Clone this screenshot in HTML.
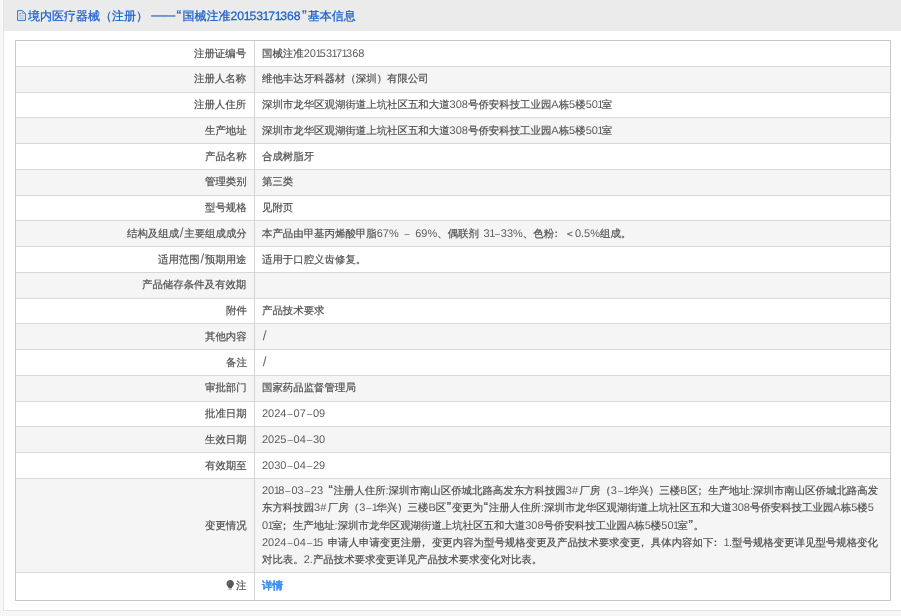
<!DOCTYPE html><html><head><meta charset="utf-8"><style>
*{margin:0;padding:0;box-sizing:border-box}
html,body{width:901px;height:616px;overflow:hidden;background:#f7f7f7;font-family:"Liberation Sans",sans-serif;color:#333;text-rendering:geometricPrecision}
#panel{position:absolute;left:3px;top:0;width:910px;height:611px;background:#fff;border-left:1px solid #e4e4e4;border-bottom:1px solid #e4e4e4}
#head{position:absolute;left:0;top:0;width:100%;height:31px;background:#ebebeb}
#title{position:absolute;left:24px;top:8.6px;font-size:12px;line-height:15px;color:#1a5fcc;white-space:nowrap;-webkit-text-stroke:0.25px #1a5fcc}
#title b{font-weight:normal;font-size:12.2px}
#title i{font-style:normal;letter-spacing:-1.1px;margin-left:-0.4px}
#title q{padding:0 1.25px;font-size:14px;line-height:0}
q:before,q:after{content:none}
s{text-decoration:none}
u{text-decoration:none}
em{font-style:normal}
.md{position:relative;top:-1px}
.p{position:relative;left:-3.2px}
.v i.w{letter-spacing:-0.6px;margin-left:-0.3px}
#icon{position:absolute;left:-4px;top:0}
#tbl{position:absolute;left:15px;top:40px;width:876px;height:561px;border:1px solid #c9c9c9}
.r{position:absolute;left:0;width:874px;border-top:1px solid #d9d9d9}
.r.g{background:#f5f5f5}
.l{position:absolute;right:643.6px;white-space:nowrap;font-size:10.43px;color:#4d4d4d}
.v{position:absolute;left:246px;white-space:nowrap;font-size:10.43px;color:#4d4d4d;word-spacing:1.8px}
.v b,.l b{font-weight:normal;font-size:11px}
.v i,.l i{font-style:normal;letter-spacing:-1.65px;margin-left:-0.55px}
.v u{font-size:9.4px;padding:0 0.85px 0 1.05px;position:relative;top:-0.3px;line-height:0}
.v em{letter-spacing:1.5px}
.v q{padding:0 0.7px;font-size:13px;line-height:0}
.v s,.l s{padding:0 0.7px;font-size:13.5px;line-height:0;color:#666}
#div{position:absolute;left:238px;top:0;width:1px;height:559px;background:#d3d3d3}
a{color:#3a8ef0;text-decoration:none;font-weight:bold}
.l,.v,#title{will-change:transform}
.l,.v{-webkit-text-stroke:0.2px #555}
.l b,.v b{-webkit-text-stroke:0;color:#5c5c5c}
.v a{-webkit-text-stroke:0.1px #3a8ef0}
.v s,.l s{-webkit-text-stroke:0}
</style></head><body>
<div id="panel"><div id="head"></div>
<svg id="icon" width="30" height="30" viewBox="0 0 30 30"><path d="M17.6 10.6H22.4L25.4 13.6V20.4H17.6Z" fill="none" stroke="#2a6ad2" stroke-width="0.95" stroke-linejoin="round"/><path d="M22.4 11.2V13.4H24.8" fill="none" stroke="#5f8fdc" stroke-width="0.8"/><path d="M19.3 13.7H21.2" stroke="#2a6ad2" stroke-width="0.9"/><path d="M19.3 15.9H23.7M19.3 18.1H23.7" stroke="#86aae4" stroke-width="0.9"/></svg>
<div id="title">境内医疗器械（注册） <span class="md">—</span><span class="md">—</span><q>“</q>国械注准<b class="n">20<i>1</i>53<i>1</i>7<i>1</i>368</b><q>”</q>基本信息</div>
</div>
<div id="tbl">
<div class="r" style="top:-1px;height:26px;border-top:none;"><span class="l" style="top:7.60px;line-height:13px">注册证编号</span><span class="v" style="top:7.60px;line-height:13px">国械注准<b class="n">20<i>1</i>53<i>1</i>7<i>1</i>368</b></span></div>
<div class="r g" style="top:25px;height:26px;"><span class="l" style="top:6.36px;line-height:13px">注册人名称</span><span class="v" style="top:6.36px;line-height:13px">维他丰达牙科器材（深圳）有限公司</span></div>
<div class="r" style="top:51px;height:25px;"><span class="l" style="top:6.12px;line-height:13px">注册人住所</span><span class="v" style="top:6.12px;line-height:13px">深圳市龙华区观湖街道上坑社区五和大道<b class="n">308</b>号侨安科技工业园<b class="n">A</b>栋<b class="n">5</b>楼<b class="n">50<i>1</i></b>室</span></div>
<div class="r g" style="top:76px;height:26px;"><span class="l" style="top:6.88px;line-height:13px">生产地址</span><span class="v" style="top:6.88px;line-height:13px">深圳市龙华区观湖街道上坑社区五和大道<b class="n">308</b>号侨安科技工业园<b class="n">A</b>栋<b class="n">5</b>楼<b class="n">50<i>1</i></b>室</span></div>
<div class="r" style="top:102px;height:26px;"><span class="l" style="top:6.64px;line-height:13px">产品名称</span><span class="v" style="top:6.64px;line-height:13px">合成树脂牙</span></div>
<div class="r g" style="top:128px;height:26px;"><span class="l" style="top:6.40px;line-height:13px">管理类别</span><span class="v" style="top:6.40px;line-height:13px">第三类</span></div>
<div class="r" style="top:154px;height:25px;"><span class="l" style="top:6.16px;line-height:13px">型号规格</span><span class="v" style="top:6.16px;line-height:13px">见附页</span></div>
<div class="r g" style="top:179px;height:26px;"><span class="l" style="top:6.92px;line-height:13px">结构及组成<s>/</s>主要组成成分</span><span class="v" style="top:6.92px;line-height:13px">本产品由甲基丙烯酸甲脂<b class="n">67%</b> <b class="n"><u>–</u></b> <b class="n">69%</b>、偶联剂 <b class="n">3<i>1</i><u>–</u>33%</b>、色粉<span class="p">：</span>＜<b class="n">0.5%</b>组成。</span></div>
<div class="r" style="top:205px;height:26px;"><span class="l" style="top:6.68px;line-height:13px">适用范围<s>/</s>预期用途</span><span class="v" style="top:6.68px;line-height:13px">适用于口腔义齿修复。</span></div>
<div class="r g" style="top:231px;height:26px;"><span class="l" style="top:6.44px;line-height:13px">产品储存条件及有效期</span><span class="v" style="top:6.44px;line-height:13px"></span></div>
<div class="r" style="top:257px;height:25px;"><span class="l" style="top:6.20px;line-height:13px">附件</span><span class="v" style="top:6.20px;line-height:13px">产品技术要求</span></div>
<div class="r g" style="top:282px;height:26px;"><span class="l" style="top:6.96px;line-height:13px">其他内容</span><span class="v" style="top:6.96px;line-height:13px"><s>/</s></span></div>
<div class="r" style="top:308px;height:26px;"><span class="l" style="top:6.72px;line-height:13px">备注</span><span class="v" style="top:6.72px;line-height:13px"><s>/</s></span></div>
<div class="r g" style="top:334px;height:26px;"><span class="l" style="top:6.48px;line-height:13px">审批部门</span><span class="v" style="top:6.48px;line-height:13px">国家药品监督管理局</span></div>
<div class="r" style="top:360px;height:25px;"><span class="l" style="top:6.24px;line-height:13px">批准日期</span><span class="v" style="top:6.24px;line-height:13px"><b class="n">2024<u>–</u>07<u>–</u>09</b></span></div>
<div class="r g" style="top:385px;height:26px;"><span class="l" style="top:7.00px;line-height:13px">生效日期</span><span class="v" style="top:7.00px;line-height:13px"><b class="n">2025<u>–</u>04<u>–</u>30</b></span></div>
<div class="r" style="top:411px;height:26px;"><span class="l" style="top:6.76px;line-height:13px">有效期至</span><span class="v" style="top:6.76px;line-height:13px"><b class="n">2030<u>–</u>04<u>–</u>29</b></span></div>
<div class="r g" style="top:437px;height:94px"><span class="l" style="top:40.5px;line-height:13px">变更情况</span><div class="v" style="top:4px;line-height:17.33px"><b class="n">20<i>1</i>8<u>–</u>03<u>–</u>23</b> <q>“</q>注册人住所<b class="n">:</b>深圳市南山区侨城北路高发东方科技园<b class="n">3<em>#</em></b>厂房（<b class="n">3<u>–</u><i>1</i></b>华兴）三楼<b class="n">B</b>区<span class="p">；</span>生产地址<b class="n">:</b>深圳市南山区侨城北路高发<br>东方科技园<b class="n">3<em>#</em></b>厂房（<b class="n">3<u>–</u><i>1</i></b>华兴）三楼<b class="n">B</b>区<q>”</q>变更为<q>“</q>注册人住所<b class="n">:</b>深圳市龙华区观湖街道上坑社区五和大道<b class="n">308</b>号侨安科技工业园<b class="n">A</b>栋<b class="n">5</b>楼<b class="n">5</b><br><b class="n">0<i>1</i></b>室<span class="p">；</span>生产地址<b class="n">:</b>深圳市龙华区观湖街道上坑社区五和大道<b class="n">308</b>号侨安科技工业园<b class="n">A</b>栋<b class="n">5</b>楼<b class="n">50<i>1</i></b>室<q>”</q>。<br><b class="n">2024<u>–</u>04<u>–</u><i>1</i>5</b> 申请人申请变更注册<span class="p">，</span>变更内容为型号规格变更及产品技术要求变更<span class="p">，</span>具体内容如下<span class="p">：</span><b class="n"><i class="w">1</i>.</b>型号规格变更详见型号规格变化<br>对比表。<b class="n">2.</b>产品技术要求变更详见产品技术要求变化对比表。</div></div>
<div class="r" style="top:531px;height:28px"><span class="l" style="top:7px;line-height:13px">注</span><span class="v" style="top:7px;line-height:13px"><a>详情</a></span></div>
<div id="div"></div>
</div><svg style="position:absolute;left:220px;top:575px" width="20" height="20" viewBox="0 0 20 20"><path d="M10.2 5.1C8.1 5.1 6.5 6.7 6.5 8.8C6.5 10 7.1 10.9 7.8 11.6L8.6 13.1H11.8L12.6 11.6C13.3 10.9 13.9 10 13.9 8.8C13.9 6.7 12.3 5.1 10.2 5.1Z" fill="#585858"/><rect x="8.7" y="13.4" width="3" height="1.2" fill="#8a8a8a"/><path d="M8.3 9.3C8.3 8 8.9 7.1 9.9 6.8" stroke="#8c8c8c" stroke-width="0.8" fill="none"/></svg><div>
</div></body></html>
